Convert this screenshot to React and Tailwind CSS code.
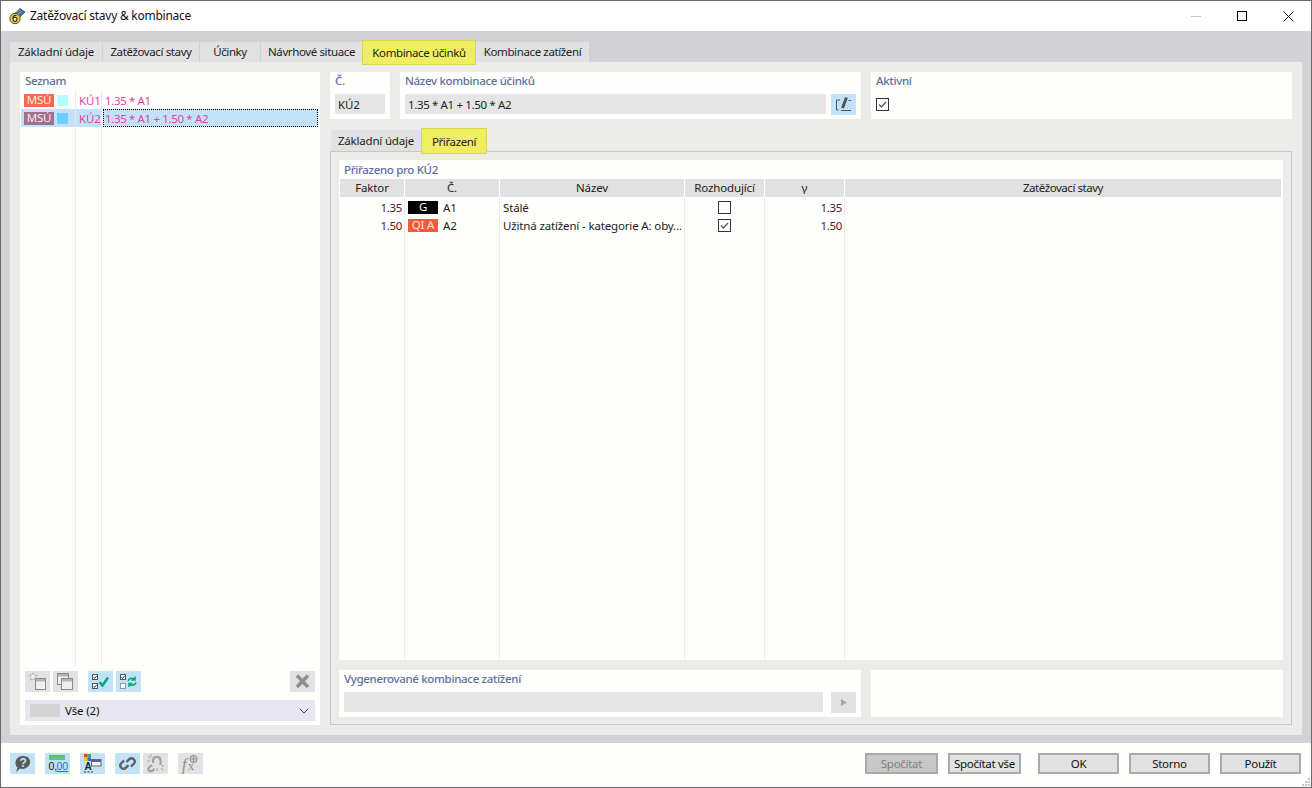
const Chk = ({ on }) => (
  <svg width="13" height="13" viewBox="0 0 13 13" className="block shrink-0">
    <rect x="0.5" y="0.5" width="12" height="12" fill="#fefefc" stroke="#333" />
    {on && <path d="M3 6.5 L5.3 9 L10 4" fill="none" stroke="#555" strokeWidth="1.2" />}
  </svg>
);

const Tab = ({ w, children, hl, cls = "tracking-[-0.38px]" }) =>
  hl ? (
    <div className={`${w} ${cls} relative z-10 -mt-[2px] -mb-[3px] flex items-center justify-center border border-[#d8d850] bg-[#eeee60] text-[#222]`}>
      {children}
    </div>
  ) : (
    <div className={`${w} ${cls} flex items-center justify-center bg-[#e1e1e1] text-[#222]`}>{children}</div>
  );

const Label = ({ children, cls = "" }) => (
  <div className={`font-medium tracking-[-0.33px] text-[#5f6f9e] ${cls}`}>{children}</div>
);

const IBtn = ({ active, children, cls = "" }) => (
  <div className={`h-[21px] w-[25px] shrink-0 ${active ? "bg-[#c2e2fa]" : "bg-[#e2e2e2]"} ${cls}`}>
    <svg width="25" height="21" viewBox="0 0 25 21" className="block">{children}</svg>
  </div>
);

const Win = ({ x, y, w = 11, h = 11, c = "#8c8c8c" }) => (
  <g>
    <rect x={x + 0.5} y={y + 0.5} width={w} height={h} fill="#efefef" stroke={c} />
    <rect x={x + 1} y={y + 1} width={w - 1} height="2.5" fill="#b5b5b5" />
  </g>
);

const Box = ({ x, y, on, c = "#555" }) => (
  <g>
    <rect x={x + 0.5} y={y + 0.5} width="5" height="5" fill="#fff" stroke={c} />
    {on && <path d={`M${x + 1.5} ${y + 3} l1 1.5 l2.5 -3`} fill="none" stroke="#333" strokeWidth="0.9" />}
  </g>
);

const Cell = ({ children, cls = "" }) => (
  <div className={`flex h-full items-center border-r border-[#ebebe9] ${cls}`}>{children}</div>
);

const Head = ({ children, last, cls = "" }) => (
  <div className={`flex h-[18px] items-center justify-center bg-[#e1e1e1] text-[#222] ${last ? "" : "border-r border-[#fefefc]"} ${cls}`}>{children}</div>
);

const Btn = ({ w, children, off }) => (
  <div className={`${w} flex h-[21px] shrink-0 items-center justify-center border-2 border-[#a9a9a9] pt-px tracking-[-0.28px] ${off ? "bg-[#c8c8c8] text-[#808080]" : "bg-[#e1e1e1] text-[#111]"}`}>
    {children}
  </div>
);

const Row = ({ sel, code, text, sq, badge }) => (
  <>
    <div className={`flex h-[18px] items-center border-r border-[#ebebe9] pl-[3px] ${sel ? "bg-[#c2e2fa]" : ""}`}>
      <div className={`flex h-[13px] w-[30px] items-center justify-center text-[#fbe8e0] ${badge}`}>MSÚ</div>
      <div className={`ml-[3px] h-[11px] w-[11px] ${sq}`} />
    </div>
    <div className={`flex h-[18px] items-center border-r border-[#ebebe9] pl-[3px] pt-px text-[#e4429c] ${sel ? "bg-[#c2e2fa]" : ""}`}>{code}</div>
    <div className={`flex h-[18px] items-center pt-px tracking-[-0.36px] text-[#e4429c] ${sel ? "ml-px border border-dotted border-black bg-[#c2e2fa] pl-px" : "pl-[3px]"}`}>{text}</div>
  </>
);

export default function App() {
  return (
    <div
      className="relative box-border flex h-[788px] w-[1312px] flex-col overflow-hidden border border-[#6c6c6c] bg-[#fefefc] text-[11.5px] leading-none tracking-[-0.15px]"
      style={{ fontFamily: '"Noto Sans", "Open Sans", sans-serif' }}
    >
      {/* title bar */}
      <div className="flex h-[30px] shrink-0 items-center bg-white">
        <svg width="18" height="18" viewBox="0 0 18 18" className="ml-[7px] shrink-0">
          <path d="M5 8 L12 1.5 L17 5 L11 11 Z" fill="#4a6a9a" stroke="#2b3c5c" strokeWidth="0.7" />
          <path d="M8 5 L12 3 M10 7 L14 4.5" stroke="#b9c9e4" strokeWidth="0.7" />
          <circle cx="7" cy="11.5" r="5.2" fill="#ecd23a" stroke="#5a5220" strokeWidth="1" />
          <circle cx="7" cy="12.3" r="2" fill="#fff" stroke="#333" strokeWidth="1.2" />
          <path d="M5 11 C5 8.5 7 8 8.6 8.5" fill="none" stroke="#333" strokeWidth="1.2" />
        </svg>
        <span className="ml-[4px] text-[12px] tracking-[-0.25px] text-[#111]">Zatěžovací stavy &amp; kombinace</span>
        <div className="ml-auto flex">
          <div className="flex h-[30px] w-[46px] items-center justify-center">
            <div className="h-px w-[10px] bg-[#c8c8c8]" />
          </div>
          <div className="flex h-[30px] w-[46px] items-center justify-center">
            <div className="h-[10px] w-[10px] border border-black" />
          </div>
          <div className="flex h-[30px] w-[46px] items-center justify-center">
            <svg width="11" height="11" viewBox="0 0 11 11"><path d="M0.5 0.5 L10.5 10.5 M10.5 0.5 L0.5 10.5" stroke="#111" strokeWidth="1" /></svg>
          </div>
        </div>
      </div>

      {/* grey body */}
      <div className="flex h-[712px] shrink-0 flex-col bg-[#d2d2d6] pb-[8px] pl-[9px] pr-[9px] pt-[11px]">
        <div className="flex h-[20px] shrink-0">
          <Tab w="w-[92px]" cls="tracking-[-0.2px]">Základní údaje</Tab>
          <div className="w-px" />
          <Tab w="w-[96px]">Zatěžovací stavy</Tab>
          <div className="w-px" />
          <Tab w="w-[60px]">Účinky</Tab>
          <div className="w-px" />
          <Tab w="w-[101px]">Návrhové situace</Tab>
          <Tab w="w-[114px]" hl>Kombinace účinků</Tab>
          <Tab w="w-[113px]">Kombinace zatížení</Tab>
        </div>

        <div className="flex min-h-0 flex-1 gap-[10px] bg-[#ebebe9] p-[10px]">
          {/* left list panel */}
          <div className="flex w-[300px] shrink-0 flex-col bg-[#fefefc]">
            <Label cls="flex h-[18px] shrink-0 items-center pl-[5px]">Seznam</Label>
            <div className="ml-px mr-[2px] mt-px grid h-[575px] shrink-0 grid-cols-[55px_26px_1fr] grid-rows-[18px_18px_1fr]">
              <Row code="KÚ1" text="1.35 * A1" badge="bg-[#f56a50]" sq="bg-[#b4ffff]" />
              <Row sel code="KÚ2" text="1.35 * A1 + 1.50 * A2" badge="bg-[#a0708f]" sq="bg-[#6dcfff]" />
              <div className="border-r border-[#ebebe9]" />
              <div className="border-r border-[#ebebe9]" />
              <div />
            </div>
            <div className="mt-[5px] flex px-[5px]">
              <IBtn>
                <path d="M8 1.5 l1.2 2.6 2.8 .3 -2 2 .5 2.8 -2.5 -1.4 -2.5 1.4 .5 -2.8 -2 -2 2.8 -.3z" fill="#f4f4f4" stroke="#a8a8a8" strokeWidth="0.8" />
                <Win x={10} y={7} w={10} />
              </IBtn>
              <IBtn cls="ml-[3px]">
                <Win x={4} y={2} />
                <Win x={8} y={7} />
              </IBtn>
              <IBtn active cls="ml-[10px]">
                <Box x={4} y={3} on />
                <Box x={4} y={12} on />
                <path d="M11.5 11 L14.5 14.5 L20 6.5" fill="none" stroke="#00a573" strokeWidth="2.4" />
              </IBtn>
              <IBtn active cls="ml-[3px]">
                <Box x={4} y={3} on />
                <Box x={4} y={12} c="#9a9a9a" />
                <path d="M12 10 C13 6.5 17 6.5 19 8.5 M19 5.5 V9 H15.5" fill="none" stroke="#00a573" strokeWidth="1.5" />
                <path d="M20 11.5 C19 15 15 15 13 13 M13 16 V12.5 H16.5" fill="none" stroke="#00a573" strokeWidth="1.5" />
              </IBtn>
              <IBtn cls="ml-auto">
                <path d="M7 4.5 L18 16 M18 4.5 L7 16" stroke="#8e8e8e" strokeWidth="3.4" />
              </IBtn>
            </div>
            <div className="mx-[5px] mt-[8px] flex h-[21px] shrink-0 items-center bg-[#e6e5f1] pl-[5px] pr-[5px] text-[#111]">
              <div className="h-[13px] w-[30px] bg-[#d4d4d4]" />
              <span className="ml-[5px]">Vše (2)</span>
              <svg width="10" height="6" viewBox="0 0 10 6" className="ml-auto mr-px"><path d="M1 1 L5 5 L9 1" fill="none" stroke="#444" strokeWidth="1" /></svg>
            </div>
          </div>

          {/* right column */}
          <div className="flex min-w-0 flex-1 flex-col">
            <div className="flex h-[47px] shrink-0 gap-[10px]">
              <div className="flex w-[60px] flex-col bg-[#fefefc] px-[5px]">
                <Label cls="mb-[4px] flex h-[18px] items-center">Č.</Label>
                <div className="flex h-[20px] items-center bg-[#e5e5e5] pl-[3px] pt-px text-[#222]">KÚ2</div>
              </div>
              <div className="flex w-[461px] flex-col bg-[#fefefc] px-[5px]">
                <Label cls="mb-[4px] flex h-[18px] items-center">Název kombinace účinků</Label>
                <div className="flex">
                  <div className="flex h-[20px] w-[421px] items-center bg-[#e5e5e5] pl-[3px] pt-px tracking-[-0.36px] text-[#222]">1.35 * A1 + 1.50 * A2</div>
                  <IBtn active cls="ml-[5px]">
                    <path d="M9 6 H5.5 V16 H7.5 M10 16.5 H20" fill="none" stroke="#555" strokeWidth="1" />
                    <path d="M11.5 14 L15.5 3.5" stroke="#555" strokeWidth="3" />
                    <path d="M17.5 6.5 H20" stroke="#555" strokeWidth="1" />
                  </IBtn>
                </div>
              </div>
              <div className="flex flex-1 flex-col bg-[#fefefc] px-[5px]">
                <Label cls="mb-[4px] flex h-[18px] items-center">Aktivní</Label>
                <div className="mt-[4px]"><Chk on /></div>
              </div>
            </div>

            <div className="mt-[11px] flex h-[21px] shrink-0 pl-px">
              <Tab w="w-[90px] pt-px" cls="tracking-[-0.2px]">Základní údaje</Tab>
              <Tab w="w-[66px] pt-px" hl>Přiřazení</Tab>
            </div>

            <div className="flex min-h-0 flex-1 flex-col border border-[#c6c6d2] px-[8px] pb-[7px] pt-[8px]">
              <div className="flex h-[500px] shrink-0 flex-col bg-[#fefefc] pl-px pr-[2px]">
                <Label cls="flex h-[19px] shrink-0 items-center pl-[4px]">Přiřazeno pro KÚ2</Label>
                <div className="grid min-h-0 flex-1 grid-cols-[65px_95px_185px_80px_80px_1fr] grid-rows-[19px_18px_18px_1fr]">
                  <Head>Faktor</Head>
                  <Head>Č.</Head>
                  <Head>Název</Head>
                  <Head>Rozhodující</Head>
                  <Head>γ</Head>
                  <Head last cls="tracking-[-0.45px]">Zatěžovací stavy</Head>

                  <Cell cls="justify-end pr-[2px] pt-px tracking-[-0.3px] text-[#5a1a35]">1.35</Cell>
                  <Cell cls="pl-[3px] text-[#222]">
                    <div className="flex h-[13px] w-[30px] items-center justify-center bg-black text-white">G</div>
                    <span className="ml-[5px] pt-px">A1</span>
                  </Cell>
                  <Cell cls="pl-[3px] pt-px text-[#222]">Stálé</Cell>
                  <Cell cls="justify-center"><Chk /></Cell>
                  <Cell cls="justify-end pr-[2px] pt-px tracking-[-0.3px] text-[#5a1a35]">1.35</Cell>
                  <div />

                  <Cell cls="justify-end pr-[2px] pt-px tracking-[-0.3px] text-[#5a1a35]">1.50</Cell>
                  <Cell cls="pl-[3px] text-[#222]">
                    <div className="flex h-[13px] w-[30px] items-center justify-center bg-[#f5583a] text-[#fde0d8]">QI A</div>
                    <span className="ml-[5px] pt-px">A2</span>
                  </Cell>
                  <Cell cls="pl-[3px] pt-px text-[#222]">Užitná zatížení - kategorie A: oby...</Cell>
                  <Cell cls="justify-center"><Chk on /></Cell>
                  <Cell cls="justify-end pr-[2px] pt-px tracking-[-0.3px] text-[#5a1a35]">1.50</Cell>
                  <div />

                  <Cell /><Cell /><Cell /><Cell /><Cell />
                  <div />
                </div>
              </div>

              <div className="mt-[10px] flex h-[47px] shrink-0 gap-[10px]">
                <div className="flex w-[522px] shrink-0 flex-col bg-[#fefefc] px-[5px]">
                  <Label cls="mb-[4px] flex h-[18px] items-center">Vygenerované kombinace zatížení</Label>
                  <div className="flex">
                    <div className="h-[20px] w-[479px] bg-[#e5e5e5]" />
                    <IBtn cls="ml-[8px]">
                      <path d="M10 7 L16 10.5 L10 14 Z" fill="#a8a8a8" />
                    </IBtn>
                  </div>
                </div>
                <div className="flex-1 bg-[#fefefc]" />
              </div>
            </div>
          </div>
        </div>
      </div>

      {/* footer */}
      <div className="flex min-h-0 flex-1 items-start bg-[#fefefc] pl-[9px] pr-[9px] pt-[10px]">
        <IBtn active>
          <path d="M6 19 L7.5 14.5 C3.5 11 5.5 3 13 3 C20 3 21.5 9 19 12.5 C16.5 16 12 16.5 10 15.5 Z" fill="#5a5a5a" />
          <text x="13" y="14" textAnchor="middle" fontSize="12" fontWeight="700" fill="#c2e2fa" fontFamily="Liberation Sans">?</text>
        </IBtn>
        <IBtn active cls="ml-[10px]">
          <rect x="4" y="2" width="16" height="5" fill="#62c57d" />
          <path d="M6 2 V4 M9 2 V4 M12 2 V4 M15 2 V4 M18 2 V4" stroke="#3c9a58" strokeWidth="0.6" />
          <text x="3.5" y="17" fontSize="10.5" letterSpacing="0" fontFamily="Liberation Sans" fill="#111">0,</text>
          <text x="11.5" y="17" fontSize="10.5" letterSpacing="0" fontFamily="Liberation Sans" fill="#2f6fd8" textDecoration="underline">00</text>
        </IBtn>
        <IBtn active cls="ml-[10px]">
          <rect x="4" y="1" width="3.5" height="3.5" fill="#e03a3a" />
          <rect x="7.5" y="1" width="3.5" height="3.5" fill="#47b04a" />
          <rect x="4" y="4.5" width="3.5" height="3.5" fill="#e8d020" />
          <rect x="7.5" y="4.5" width="3.5" height="3.5" fill="#4a60d8" />
          <rect x="11.5" y="6.5" width="9.5" height="6.5" fill="#f2f2f2" stroke="#666" />
          <rect x="12" y="7" width="9" height="2" fill="#5a5a98" />
          <text x="4.5" y="16.5" fontSize="10" fontWeight="700" fontFamily="Liberation Sans" fill="#222">A</text>
          <path d="M4 19 H6 M7.5 19 H9.5 M11 19 H13" stroke="#333" strokeWidth="1.2" />
        </IBtn>
        <IBtn active cls="ml-[10px]">
          <g fill="none" stroke="#606060" strokeWidth="2.4">
            <path d="M11.5 9 L14.5 6 A3.2 3.2 0 0 1 19 10.5 L16 13.5" />
            <path d="M13.5 12 L10.5 15 A3.2 3.2 0 0 1 6 10.5 L9 7.5" />
          </g>
        </IBtn>
        <IBtn cls="ml-[3px]">
          <g fill="none" stroke="#a2a2a2" strokeWidth="2.2">
            <path d="M10 10 V7 A3.8 3.8 0 0 1 17.5 7 V12" />
            <path d="M9 12 L6 14.5 A2.2 2.2 0 0 0 9.5 17.5 L11.5 16" />
          </g>
          <path d="M5 3 L7.5 5.5 M4 8 H7 M18 15 L20.5 17.5 M18 13 H21 M8 1.5 V4 M14 15 V18" stroke="#a2a2a2" strokeWidth="1" />
        </IBtn>
        <IBtn cls="ml-[10px]">
          <text x="4" y="17" fontSize="16" fontStyle="italic" fontFamily="Liberation Serif" fill="#8a8a8a">f</text>
          <text x="10" y="17" fontSize="12" fontFamily="Liberation Serif" fill="#8a8a8a">x</text>
          <circle cx="15.5" cy="6" r="3.6" fill="#d0d0d0" stroke="#8a8a8a" />
          <path d="M15.5 3 V9 M12.5 6 H18.5" stroke="#8a8a8a" strokeWidth="0.8" />
        </IBtn>

        <div className="ml-auto flex pr-px">
          <Btn w="w-[73px]" off>Spočítat</Btn>
          <div className="w-[10px]" />
          <Btn w="w-[73px]">Spočítat vše</Btn>
          <div className="w-[17px]" />
          <Btn w="w-[81px]">OK</Btn>
          <div className="w-[10px]" />
          <Btn w="w-[81px]">Storno</Btn>
          <div className="w-[10px]" />
          <Btn w="w-[81px]">Použít</Btn>
        </div>
      </div>

      {/* resize grip */}
      <svg width="10" height="10" viewBox="0 0 10 10" className="absolute bottom-0 right-0">
        <path d="M7 1 h2 v2 h-2z M4 4 h2 v2 h-2z M7 4 h2 v2 h-2z M1 7 h2 v2 h-2z M4 7 h2 v2 h-2z M7 7 h2 v2 h-2z" fill="#c4c4c4" />
      </svg>
    </div>
  );
}
